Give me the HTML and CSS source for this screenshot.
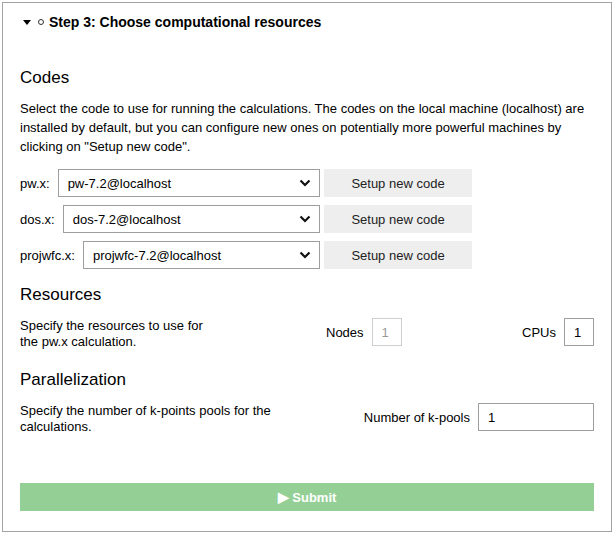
FILE: index.html
```html
<!DOCTYPE html>
<html>
<head>
<meta charset="utf-8">
<link rel="stylesheet" href="styles.css">
</head>
<body>
<div class="panel">
  <div class="summary">
    <span class="caret"></span>
    <span class="ring"></span>
    <span class="title">Step 3: Choose computational resources</span>
  </div>
  <div class="content">
    <h2 class="heading h-codes">Codes</h2>
    <p class="intro">Select the code to use for running the calculations. The codes on the local machine (localhost) are installed by default, but you can configure new ones on potentially more powerful machines by clicking on "Setup new code".</p>
    <div class="code-rows">
      <div class="code-row">
        <span class="code-label">pw.x:</span>
        <div class="select"><span class="sel-text">pw-7.2@localhost</span><svg class="chev" width="12" height="8" viewBox="0 0 12 8"><path d="M1.5 1.5 L6 6 L10.5 1.5" fill="none" stroke="#111" stroke-width="2.2"/></svg></div>
        <button class="setup">Setup new code</button>
      </div>
      <div class="code-row">
        <span class="code-label">dos.x:</span>
        <div class="select"><span class="sel-text">dos-7.2@localhost</span><svg class="chev" width="12" height="8" viewBox="0 0 12 8"><path d="M1.5 1.5 L6 6 L10.5 1.5" fill="none" stroke="#111" stroke-width="2.2"/></svg></div>
        <button class="setup">Setup new code</button>
      </div>
      <div class="code-row">
        <span class="code-label">projwfc.x:</span>
        <div class="select"><span class="sel-text">projwfc-7.2@localhost</span><svg class="chev" width="12" height="8" viewBox="0 0 12 8"><path d="M1.5 1.5 L6 6 L10.5 1.5" fill="none" stroke="#111" stroke-width="2.2"/></svg></div>
        <button class="setup">Setup new code</button>
      </div>
    </div>

    <h2 class="heading h-res">Resources</h2>
    <div class="res-row">
      <p class="desc narrow">Specify the resources to use for the pw.x calculation.</p>
      <div class="field f-nodes">
        <span class="f-label">Nodes</span>
        <input class="num disabled" value="1" disabled>
      </div>
      <div class="field f-cpus">
        <span class="f-label">CPUs</span>
        <input class="num" value="1">
      </div>
    </div>

    <h2 class="heading h-par">Parallelization</h2>
    <div class="res-row">
      <p class="desc wide">Specify the number of k-points pools for the calculations.</p>
      <div class="field f-pools">
        <span class="f-label">Number of k-pools</span>
        <input class="num wide-input" value="1">
      </div>
    </div>

    <button class="submit"><span class="play">&#9654;</span> Submit</button>
  </div>
</div>
</body>
</html>
```
FILE: styles.css
```css
* { box-sizing: border-box; }
html, body { margin: 0; padding: 0; background: #fff; }
body {
  font-family: "Liberation Sans", Arial, sans-serif;
  font-size: 13px;
  color: #000;
}
.panel {
  margin: 2px;
  width: 610px;
  height: 530px;
  border: 1px solid #a3a3a3;
  padding: 0 17px;
}
.summary {
  display: flex;
  align-items: center;
  height: 20px;
  margin-top: 9px;
  padding-left: 3px;
}
.caret {
  width: 0; height: 0;
  border-left: 4px solid transparent;
  border-right: 4px solid transparent;
  border-top: 5px solid #000;
  margin-right: 7px;
}
.ring {
  width: 6px; height: 6px;
  border: 1px solid #333;
  border-radius: 50%;
  margin-right: 5px;
}
.title {
  font-weight: bold;
  font-size: 14px;
}
.content { display: flex; flex-direction: column; }
.heading {
  font-size: 17px;
  font-weight: normal;
  line-height: 20px;
  margin: 0;
}
.h-codes { margin-top: 36px; }
.intro {
  margin: 11px 0 0;
  line-height: 19px;
}
.code-rows {
  display: flex;
  flex-direction: column;
  gap: 8px;
  margin-top: 13px;
  width: 452px;
}
.code-row {
  display: flex;
  align-items: center;
  height: 28px;
}
.code-label { margin-right: 8px; }
.select {
  flex: 1;
  height: 28px;
  border: 1px solid #9e9e9e;
  display: flex;
  align-items: center;
  justify-content: space-between;
  padding: 0 8px 0 9px;
}
.chev { display: block; }
.setup {
  width: 148px;
  height: 28px;
  margin-left: 4px;
  border: none;
  background: #eeeeee;
  font-family: inherit;
  font-size: 13px;
  color: #222;
  padding: 0;
}
.h-res { margin-top: 16px; }
.h-par { margin-top: 20px; }
.res-row {
  display: flex;
  align-items: flex-start;
  margin-top: 13px;
}
.desc {
  margin: 0;
  line-height: 16px;
}
.narrow { width: 200px; }
.wide { width: 260px; }
.field {
  display: flex;
  align-items: center;
  gap: 8px;
}
.f-nodes { margin-left: 106px; }
.f-cpus { margin-left: auto; }
.f-pools { margin-left: auto; }
.num {
  width: 30px;
  height: 28px;
  border: 1px solid #9e9e9e;
  font-family: inherit;
  font-size: 13px;
  padding: 0 0 0 9px;
  color: #000;
  background: #fff;
}
.num.disabled {
  border-color: #cfcfcf;
  color: #9a9a9a;
}
.wide-input { width: 116px; }
.submit {
  margin-top: 48px;
  height: 28px;
  width: 100%;
  border: none;
  background: #94d095;
  color: #fff;
  font-family: inherit;
  font-size: 13px;
  font-weight: bold;
}
.play { font-size: 14px; }
```
